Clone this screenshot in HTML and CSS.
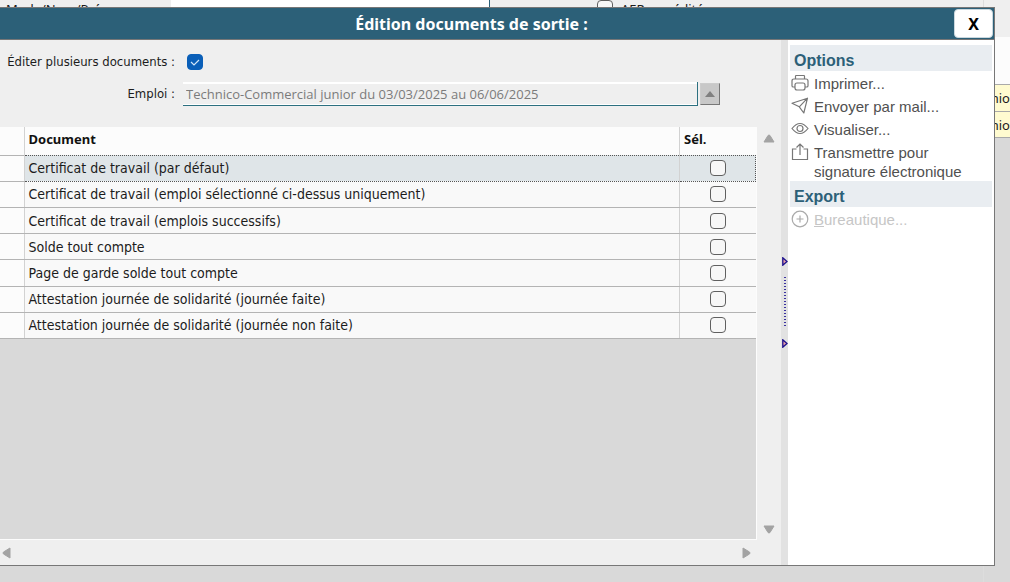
FILE: index.html
```
<!DOCTYPE html>
<html lang="fr">
<head>
<meta charset="utf-8">
<title>Édition documents de sortie</title>
<link rel="stylesheet" href="styles.css">
</head>
<body>
<div class="page">
  <div class="page-form">
    <span class="page-label">Mode/Nom/Prénom</span>
    <span class="page-field"></span>
    <label class="page-check"><input type="checkbox" class="check"> AER accrédité</label>
  </div>
  <div class="page-side">
    <div class="page-blank"></div>
    <div class="page-cell">nio</div>
    <div class="page-cell page-cell-last">nio</div>
  </div>
</div>

<section class="dialog" role="dialog" aria-labelledby="dialog-title">
  <header class="titlebar">
    <h1 class="title" id="dialog-title">Édition documents de sortie :</h1>
    <button class="close" type="button" aria-label="Fermer">X</button>
  </header>
  <div class="content">
    <main class="main">
      <form class="form">
        <label class="form-label" for="multi">Éditer plusieurs documents :</label>
        <input class="check check-blue" type="checkbox" id="multi" checked>
        <label class="form-label" for="job">Emploi :</label>
        <div class="combo">
          <input class="combo-input" id="job" type="text" value="Technico-Commercial junior du 03/03/2025 au 06/06/2025" readonly>
          <button class="combo-button" type="button" aria-label="Choisir un emploi"><svg width="10" height="6" viewBox="0 0 10 6"><path d="M0 6 5 0l5 6z" fill="#808080"/></svg></button>
        </div>
      </form>
      <div class="grid">
        <div class="grid-view">
          <table class="docs">
            <thead><tr><th class="col-mark"></th><th>Document</th><th class="col-sel">Sél.</th></tr></thead>
            <tbody>
              <tr class="selected"><td></td><td><label for="d1">Certificat de travail (par défaut)</label></td><td><input class="check" type="checkbox" id="d1"></td></tr>
              <tr><td></td><td><label for="d2">Certificat de travail (emploi sélectionné ci-dessus uniquement)</label></td><td><input class="check" type="checkbox" id="d2"></td></tr>
              <tr><td></td><td><label for="d3">Certificat de travail (emplois successifs)</label></td><td><input class="check" type="checkbox" id="d3"></td></tr>
              <tr><td></td><td><label for="d4">Solde tout compte</label></td><td><input class="check" type="checkbox" id="d4"></td></tr>
              <tr><td></td><td><label for="d5">Page de garde solde tout compte</label></td><td><input class="check" type="checkbox" id="d5"></td></tr>
              <tr><td></td><td><label for="d6">Attestation journée de solidarité (journée faite)</label></td><td><input class="check" type="checkbox" id="d6"></td></tr>
              <tr><td></td><td><label for="d7">Attestation journée de solidarité (journée non faite)</label></td><td><input class="check" type="checkbox" id="d7"></td></tr>
            </tbody>
          </table>
        </div>
        <div class="scroll scroll-v">
          <button class="arrow" type="button" aria-label="Haut"><svg width="12" height="9" viewBox="0 0 12 9"><path d="M1 8 5 1.5q1-1 2 0L11 8z" fill="#a3a3a3" stroke="#a3a3a3" stroke-linejoin="round"/></svg></button>
          <button class="arrow" type="button" aria-label="Bas"><svg width="12" height="9" viewBox="0 0 12 9"><path d="M1 1l4 6.500q1 1 2 0L11 1z" fill="#a3a3a3" stroke="#a3a3a3" stroke-linejoin="round"/></svg></button>
        </div>
        <div class="scroll scroll-h">
          <button class="arrow" type="button" aria-label="Gauche"><svg width="9" height="12" viewBox="0 0 9 12"><path d="M8 1 1.500 5q-1 1 0 2L8 11z" fill="#a3a3a3" stroke="#a3a3a3" stroke-linejoin="round"/></svg></button>
          <button class="arrow" type="button" aria-label="Droite"><svg width="9" height="12" viewBox="0 0 9 12"><path d="M1 1l6.500 4q1 1 0 2L1 11z" fill="#a3a3a3" stroke="#a3a3a3" stroke-linejoin="round"/></svg></button>
        </div>
      </div>
    </main>
    <div class="splitter">
      <svg width="6" height="9" viewBox="0 0 6 9"><path d="M.8.8v7.400L5 4.500z" fill="#e9a0a8" stroke="#1a0f8c" stroke-width="1.300"/></svg>
      <div class="grip"></div>
      <svg width="6" height="9" viewBox="0 0 6 9"><path d="M.8.8v7.400L5 4.500z" fill="#e9a0a8" stroke="#1a0f8c" stroke-width="1.300"/></svg>
    </div>
    <aside class="side">
      <h2 class="side-title">Options</h2>
      <nav class="actions">
        <a class="action" href="#"><svg class="icon" viewBox="0 0 18 18"><path d="M4.500 5V2.200q0-.7.7-.7h7.600q.7 0 .7.700V5M4 13H2.300Q1 13 1 11.700V7q0-2 2-2h12q2 0 2 2v4.700q0 1.300-1.300 1.300H14M6 9h6q2 0 2 2v3q0 2-2 2H6q-2 0-2-2v-3q0-2 2-2z"/></svg>Imprimer...</a>
        <a class="action" href="#"><svg class="icon" viewBox="0 0 18 18"><path d="M1 6.200 16.500 1.200 12.800 16 8.300 9.800zM8.300 9.800 16.500 1.200M8.300 9.800 12.800 16" stroke-linejoin="round"/></svg>Envoyer par mail...</a>
        <a class="action" href="#"><svg class="icon" viewBox="0 0 18 18"><path d="M1 8.500Q9-1.500 17 8.500 9 18.500 1 8.500z"/><circle cx="9" cy="8.500" r="3"/></svg>Visualiser...</a>
        <a class="action" href="#"><svg class="icon" viewBox="0 0 18 18"><path d="M5.500 6H1.500v10.500h15V6h-4M9 12V1.200M5.500 4.500 9 1l3.500 3.500"/></svg>Transmettre pour signature électronique</a>
      </nav>
      <h2 class="side-title">Export</h2>
      <nav class="actions">
        <a class="action disabled" href="#" aria-disabled="true"><svg class="icon" viewBox="0 0 18 18"><circle cx="9" cy="9" r="7.800"/><path d="M9 5.500v7M5.500 9h7"/></svg><span><u>B</u>ureautique...</span></a>
      </nav>
    </aside>
  </div>
</section>
</body>
</html>
```
FILE: styles.css
```
* { box-sizing: border-box; }
html, body { height: 100%; }
body {
  margin: 0;
  background: #d9d9d9;
  color: #1c1c1c;
  font: 13px/18px "Noto Sans", sans-serif;
  overflow: hidden;
}
button { padding: 0; font: inherit; cursor: pointer; }
svg { display: block; flex: none; }

.check {
  appearance: none;
  display: block;
  width: 16px;
  height: 16px;
  margin: 0 auto;
  border: 1px solid #606060;
  border-radius: 4px;
  background: #f7f7f7;
}
.check-blue {
  margin: 0;
  border-color: #0a5fb8;
  background: #0a5fb8 url("data:image/svg+xml,%3Csvg xmlns='http://www.w3.org/2000/svg' viewBox='0 0 14 14'%3E%3Cpath d='M3 7l3 3 5-5' fill='none' stroke='%23cfe4f7' stroke-width='1.200'/%3E%3C/svg%3E") center / 14px no-repeat;
}

/* Page under the dialog */
.page { display: flex; height: 100%; }
.page-form { flex: 1; display: flex; height: 37px; background: #efefef; overflow: hidden; }
.page-label { width: 171px; padding-left: 6px; }
.page-field { width: 319px; background: #fff; border-right: 1px solid #2c6078; }
.page-check { display: flex; align-items: flex-start; gap: 8px; padding-left: 107px; }
.page-side { width: 27px; border-left: 1px solid #ddd; }
.page-blank { height: 84px; background: #fcfcfc; border-top: 37px solid #efefef; }
.page-cell {
  display: flex;
  justify-content: flex-end;
  height: 27px;
  padding-top: 4px;
  background: #fffbd0;
  border-top: 1px solid #aaa;
}
.page-cell-last { border-bottom: 1px solid #aaa; }

/* Dialog over the page */
.dialog {
  position: absolute;
  inset: 7px 15px 16px 0;
  display: flex;
  flex-direction: column;
  background: #efefef;
  border: solid #777;
  border-width: 1px 1px 1px 0;
}
.titlebar {
  display: flex;
  align-items: center;
  height: 32px;
  padding: 1px;
  background: #2c6078;
  border-bottom: 1px solid #777;
}
.title {
  flex: 1;
  margin: 0;
  padding-right: 12px;
  color: #fff;
  font: bold 16px/20px "Noto Sans", sans-serif;
  text-align: center;
}
.close {
  width: 39px;
  height: 29px;
  border: 1px solid #ccd8de;
  border-radius: 4px;
  background: #fff;
  color: #000;
  font: bold 16px/20px "Noto Sans", sans-serif;
}
.content { flex: 1; display: flex; min-height: 0; }
.main { flex: 1; display: flex; flex-direction: column; min-width: 0; }

.form {
  display: grid;
  grid-template-columns: 175px 1fr;
  gap: 11px 8px;
  align-items: center;
  padding: 13px 61px 21px 0;
}
.form-label { text-align: right; font: 13px/18px "DejaVu Sans Condensed", "DejaVu Sans", sans-serif; }
.form .check-blue { margin-left: 4px; }
.combo { display: flex; align-items: center; gap: 2px; }
.combo-input {
  flex: 1;
  min-width: 0;
  height: 24px;
  padding: 0 3px;
  border: solid #2c7080;
  border-width: 0 1px 1px 0;
  background: #efefef;
  box-shadow: inset 0 2px #fff, inset 0 -1px #fff;
  color: #7b7b7b;
  font: 13px/18px "Open Sans", sans-serif;
}
.combo-button {
  display: flex;
  align-items: center;
  justify-content: center;
  width: 20px;
  height: 22px;
  border: 1px solid #ccc;
  border-right-color: #777;
  border-bottom-color: #777;
  background: #c8c8c8;
}

.grid {
  flex: 1;
  display: grid;
  grid-template-columns: 1fr 24px;
  grid-template-rows: 1fr 25px;
  min-height: 0;
}
.grid-view { background: #d9d9d9; border: solid #fcfcfc; border-width: 0 1px 1px 0; }
.docs {
  width: 100%;
  height: 212px;
  border-collapse: collapse;
  table-layout: fixed;
}
.docs th, .docs td { padding: 0 4px; text-align: left; }
.docs th { height: 28px; padding-bottom: 3px; background: #fcfcfc; color: #111; }
.docs td { background: #f9f9f9; border-bottom: 1px solid #b4b4b4; font: 14px/18px "DejaVu Sans Condensed", "DejaVu Sans", sans-serif; }
.docs td:first-child { border-top: 1px solid #b4b4b4; background: #fcfcfc; }
.docs th + th, .docs td + td { border-left: 1px solid #d2d2d2; }
.docs .col-mark { width: 24px; }
.docs .col-sel { width: 76px; }
.docs .selected td + td { background: #dfe5e8; border-top: 1px dotted #555; border-bottom: 1px dotted #555; }
.docs .selected td:last-child { border-right: 1px dotted #555; }
.docs .selected + tr td + td { border-top: 1px dotted #555; }

.scroll { display: flex; justify-content: space-between; }
.scroll-v { flex-direction: column; align-items: center; padding: 7px 0 6px; }
.scroll-h { align-items: center; padding: 0 6px 0 2px; }
.arrow { border: 0; background: none; }

.splitter {
  display: flex;
  flex-direction: column;
  align-items: flex-end;
  justify-content: center;
  gap: 11px;
  width: 7px;
  background: #e2e2e2;
}
.grip {
  width: 6px;
  height: 51px;
  background: conic-gradient(#3b32a0 25%, transparent 0) 0 0 / 4px 3px;
}

.side { width: 206px; padding: 5px 2px; background: #fff; font: 15px/19px "Liberation Sans", sans-serif; }
.side-title {
  margin: 0;
  padding: 6px 4px 0;
  background: #e9edf1;
  color: #2c6078;
  font: bold 16px/20px "Liberation Sans", sans-serif;
}
.actions { display: flex; flex-direction: column; gap: 4px; padding: 3px 0 0; }
.action { display: flex; gap: 5px; padding-left: 1px; color: #505050; text-decoration: none; }
.icon { width: 18px; height: 18px; fill: none; stroke: #777; stroke-width: 1.2; }
.disabled { color: #c6c6c6; }
.disabled .icon { stroke: #aaa; }
```
